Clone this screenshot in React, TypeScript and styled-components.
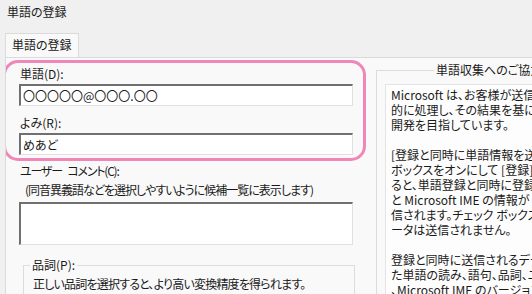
import React from 'react';
import styled, { createGlobalStyle } from 'styled-components';

const GlobalStyle = createGlobalStyle`
  html, body {
    margin: 0;
    padding: 0;
    overflow: hidden;
  }
  #root {
    width: 532px;
    height: 294px;
  }
`;

const infoParagraphs: string[][] = [
  [
    'Microsoft は、お客様が送信された単語情報を統計',
    '的に処理し、その結果を基に、より精度の高い IME の',
    '開発を目指しています。',
  ],
  [
    '[登録と同時に単語情報を送信する] チェック',
    'ボックスをオンにして [登録] ボタンをクリックす',
    'ると、単語登録と同時に登録された単語の情報',
    'と Microsoft IME の情報が Microsoft に送',
    '信されます。チェック ボックスをオフにすると、デ',
    'ータは送信されません。',
  ],
  [
    '登録と同時に送信されるデータには、登録され',
    'た単語の読み、語句、品詞、ユーザー コメント',
    '、Microsoft IME のバージョン、Windows のバージョン',
  ],
];

const App: React.FunctionComponent = () => {
  return (
    <Window>
      <GlobalStyle />
      <TitleBar>単語の登録</TitleBar>
      <TabStrip>
        <Tab>単語の登録</Tab>
      </TabStrip>
      <Panel>
        <LeftColumn>
          <Highlight>
            <FieldLabel>単語(D):</FieldLabel>
            <TextInput defaultValue="〇〇〇〇〇@〇〇〇.〇〇" />
            <FieldLabel $gap={9}>よみ(R):</FieldLabel>
            <TextInput defaultValue="めあど" />
          </Highlight>
          <FieldLabel $gap={2} $tight={-1.2} $wordGap={4}>
            ユーザー コメント(C):
          </FieldLabel>
          <Hint>(同音異義語などを選択しやすいように候補一覧に表示します)</Hint>
          <CommentBox />
          <PartGroup>
            <GroupLegend $offset={0}>品詞(P):</GroupLegend>
            <GroupText>正しい品詞を選択すると、より高い変換精度を得られます。</GroupText>
          </PartGroup>
        </LeftColumn>
        <RightColumn>
          <InfoGroup>
            <GroupLegend $offset={49}>単語収集へのご協力のお願い</GroupLegend>
            <InfoBox>
              {infoParagraphs.map((para, i) => (
                <Paragraph key={i}>
                  {para.map((line, j) => (
                    <Line key={j}>{line}</Line>
                  ))}
                </Paragraph>
              ))}
            </InfoBox>
          </InfoGroup>
        </RightColumn>
      </Panel>
    </Window>
  );
};

export default App;

const Window = styled.div`
  width: 532px;
  height: 294px;
  overflow: hidden;
  background-color: #f0f0f0;
  color: #1a1a1a;
  font-family: 'Noto Sans CJK JP', 'Noto Sans', sans-serif;
  font-size: 12px;
  font-feature-settings: 'palt';
  display: flex;
  flex-direction: column;
`;

const TitleBar = styled.div`
  flex-shrink: 0;
  height: 33px;
  box-sizing: border-box;
  padding: 4px 0 0 7px;
  line-height: 16px;
`;

const TabStrip = styled.div`
  flex-shrink: 0;
  display: flex;
  padding-left: 5px;
  height: 24px;
`;

const Tab = styled.div`
  box-sizing: border-box;
  height: 24px;
  padding: 0 6px;
  line-height: 21px;
  background-color: #f9f9f9;
  border: 1px solid #dadada;
  border-bottom: none;
`;

const Panel = styled.div`
  flex: 1;
  min-height: 0;
  min-width: 0;
  overflow: hidden;
  display: flex;
  align-items: flex-start;
  margin-left: 5px;
  background-color: #f9f9f9;
  border-top: 1px solid #dadada;
  border-left: 1px solid #dadada;
`;

const LeftColumn = styled.div`
  width: 360px;
  flex-shrink: 0;
  box-sizing: border-box;
  padding-left: 13px;
  display: flex;
  flex-direction: column;
`;

const Highlight = styled.div`
  width: 363px;
  box-sizing: border-box;
  margin: 2px 0 0 -16px;
  padding: 3px 10px 3px 13px;
  border: 3px solid #f087b8;
  border-radius: 15px;
  display: flex;
  flex-direction: column;
`;

const FieldLabel = styled.div<{ $gap?: number; $tight?: number; $wordGap?: number }>`
  margin-top: ${(p) => p.$gap || 0}px;
  margin-bottom: 2px;
  padding-left: 1px;
  line-height: 16px;
  letter-spacing: ${(p) => p.$tight || 0}px;
  word-spacing: ${(p) => p.$wordGap || 0}px;
  white-space: nowrap;
`;

const TextInput = styled.input`
  box-sizing: border-box;
  width: 334px;
  height: 22px;
  margin: 0;
  padding: 0 0 0 2px;
  background-color: #ffffff;
  border-top: 2px solid #707070;
  border-left: 2px solid #707070;
  border-right: 1px solid #e1e1e1;
  border-bottom: 1px solid #e1e1e1;
  font: inherit;
  font-feature-settings: 'palt';
  color: #1a1a1a;
  outline: none;
`;

const Hint = styled.div`
  margin-top: 1px;
  padding-left: 6px;
  line-height: 16px;
  letter-spacing: -1px;
  white-space: nowrap;
`;

const CommentBox = styled.div`
  box-sizing: border-box;
  width: 334px;
  height: 43px;
  margin-top: 4px;
  background-color: #ffffff;
  border-top: 2px solid #707070;
  border-left: 2px solid #707070;
  border-right: 1px solid #e1e1e1;
  border-bottom: 1px solid #e1e1e1;
`;

const PartGroup = styled.fieldset`
  box-sizing: border-box;
  width: 332px;
  height: 60px;
  margin: 12px 0 0 4px;
  padding: 3px 0 0 6px;
  border: 1px solid #dcdcdc;
`;

const GroupLegend = styled.legend<{ $offset: number }>`
  margin-left: ${(p) => p.$offset}px;
  padding: 0 2px;
  line-height: 16px;
  white-space: nowrap;
`;

const GroupText = styled.div`
  margin-left: 3px;
  line-height: 16px;
  letter-spacing: -0.8px;
  white-space: nowrap;
`;

const RightColumn = styled.div`
  flex: 1;
  min-width: 0;
  padding: 4px 0 0 10px;
`;

const InfoGroup = styled.fieldset`
  box-sizing: border-box;
  width: 320px;
  height: 260px;
  margin: 0;
  padding: 6px 0 0 8px;
  border: 1px solid #dcdcdc;
`;

const InfoBox = styled.div`
  box-sizing: border-box;
  height: 240px;
  padding: 2px 5px;
  overflow: hidden;
  background-color: #fdfdfd;
  border: 1px solid #e4e4e4;
  line-height: 15px;
`;

const Paragraph = styled.div`
  margin-bottom: 15px;
`;

const Line = styled.div`
  white-space: nowrap;
`;
